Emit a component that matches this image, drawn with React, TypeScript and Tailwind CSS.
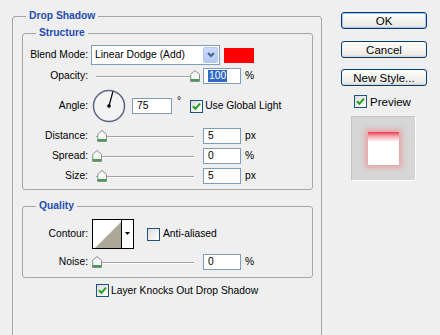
import React from "react";

function Check({ checked }: { checked: boolean }) {
  return (
    <div className="w-[13px] h-[13px] shrink-0 border border-[#1c5180] bg-[linear-gradient(135deg,#dcdcd7,#ffffff)] flex items-center justify-center">
      {checked && (
        <svg width="9" height="9" viewBox="0 0 9 9">
          <path d="M1 4.2 L3.4 6.8 L8 1.6" fill="none" stroke="#21a121" strokeWidth="2" />
        </svg>
      )}
    </div>
  );
}

function Thumb() {
  return (
    <svg width="10" height="12" viewBox="0 0 10 12">
      <path d="M5 0.5 L9.5 4.5 V11.5 H0.5 V4.5 Z" fill="#f8f8f8" stroke="#8e8e8e" />
      <path d="M1 9 H9 V11 H1 Z" fill="#3f9f52" />
      <path d="M1 5 V9" stroke="#9fd3a8" />
    </svg>
  );
}

function Slider({ pos }: { pos: number }) {
  return (
    <div className="relative w-[108px] h-[16px] shrink-0">
      <div className="absolute left-[4px] right-[6px] top-[8px] h-[2px] border-t border-[#a3a3a3] border-b border-b-white" />
      <div className="absolute top-[2px]" style={{ left: pos }}>
        <Thumb />
      </div>
    </div>
  );
}

function Field({ value, selected }: { value: string; selected?: boolean }) {
  return (
    <div className="w-[38px] h-[16px] shrink-0 border border-[#7f9db9] bg-white flex items-center pl-[4px] text-[10.3px]">
      {selected ? <span className="bg-[#316ac5] text-white px-[1px] leading-[12px]">{value}</span> : value}
    </div>
  );
}

function Label({ text }: { text: string }) {
  return <div className="w-[65px] shrink-0 text-right">{text}</div>;
}

function SliderRow({ label, pos, value, unit, selected, top }: { label: string; pos: number; value: string; unit: string; selected?: boolean; top: string }) {
  return (
    <div className={`flex items-center h-[16px] ${top}`}>
      <Label text={label} />
      <div className="ml-[4px]"><Slider pos={pos} /></div>
      <div className="ml-[3px]"><Field value={value} selected={selected} /></div>
      <div className="ml-[4px]">{unit}</div>
    </div>
  );
}

export default function App() {
  return (
    <div className="w-[440px] h-[335px] overflow-hidden bg-[#efefef] flex font-['Liberation_Sans',Arial,sans-serif] text-black text-[10.3px] leading-[12px]">
      <div className="pl-[12px] pt-[10px] shrink-0">
        <fieldset className="w-[310px] h-[340px] border border-[#a5a5a5] rounded-[3px]">
          <legend className="ml-[13px] px-[3px] h-[12px] leading-[12px] font-bold text-[10.3px] text-[#1f4db3]">Drop Shadow</legend>
          <div className="pl-[9px] pr-[8px] pt-[5px]">

            <fieldset className="border border-[#a5a5a5] rounded-[3px]">
              <legend className="ml-[13px] px-[3px] h-[12px] leading-[12px] font-bold text-[10.3px] text-[#1f4db3]">Structure</legend>
              <div className="pt-[6px] pb-[5px]">

                <div className="flex items-center h-[20px]">
                  <Label text="Blend Mode:" />
                  <div className="ml-[3px] w-[129px] h-[20px] border border-[#7f9db9] bg-white flex items-center">
                    <div className="flex-1 pl-[3px]">Linear Dodge (Add)</div>
                    <div className="w-[15px] h-[16px] mr-[1px] rounded-[2px] bg-[linear-gradient(to_bottom,#cbdafc,#b6cbf6)] border border-[#b1c6f0] flex items-center justify-center">
                      <svg width="8" height="6" viewBox="0 0 8 6">
                        <path d="M1 1 L4 4 L7 1" fill="none" stroke="#4d6185" strokeWidth="2" />
                      </svg>
                    </div>
                  </div>
                  <div className="ml-[4px] w-[30px] h-[15px] bg-[#ff0000]" />
                </div>

                <SliderRow label="Opacity:" pos={98} value="100" unit="%" selected top="mt-[3px]" />

                <div className="flex items-center h-[36px] mt-[4px]">
                  <Label text="Angle:" />
                  <svg className="ml-[4px] shrink-0" width="34" height="34" viewBox="0 0 34 34">
                    <circle cx="17" cy="17" r="15.5" fill="#f3f3f3" stroke="#5b6583" strokeWidth="1.5" />
                    <line x1="17" y1="17" x2="20.9" y2="2.5" stroke="#000" strokeWidth="1.2" />
                    <circle cx="17" cy="17" r="1.8" fill="#000" />
                  </svg>
                  <div className="ml-[6px] w-[40px] h-[16px] border border-[#7f9db9] bg-white flex items-center pl-[4px]">75</div>
                  <div className="ml-[5px] self-start mt-[7px]">°</div>
                  <div className="ml-[9px]"><Check checked /></div>
                  <div className="ml-[2px]">Use Global Light</div>
                </div>

                <SliderRow label="Distance:" pos={5} value="5" unit="px" top="mt-[4px]" />
                <SliderRow label="Spread:" pos={0} value="0" unit="%" top="mt-[4px]" />
                <SliderRow label="Size:" pos={5} value="5" unit="px" top="mt-[4px]" />
              </div>
            </fieldset>

            <fieldset className="mt-[10px] border border-[#a5a5a5] rounded-[3px]">
              <legend className="ml-[13px] px-[3px] h-[12px] leading-[12px] font-bold text-[10.3px] text-[#1f4db3]">Quality</legend>
              <div className="pt-[7px] pb-[7px]">
                <div className="flex items-center h-[30px]">
                  <Label text="Contour:" />
                  <svg className="ml-[4px] shrink-0" width="42" height="30" viewBox="0 0 42 30">
                    <rect x="0.5" y="0.5" width="41" height="29" fill="#fff" stroke="#000" />
                    <path d="M3 29 L29 3 V29 Z" fill="#aca899" />
                    <line x1="29.5" y1="0.5" x2="29.5" y2="29.5" stroke="#000" />
                    <path d="M33 13 H38 L35.5 16 Z" fill="#000" />
                  </svg>
                  <div className="ml-[13px]"><Check checked={false} /></div>
                  <div className="ml-[3px]">Anti-aliased</div>
                </div>
                <SliderRow label="Noise:" pos={0} value="0" unit="%" top="mt-[5px]" />
              </div>
            </fieldset>

            <div className="flex items-center mt-[6px] pl-[74px]">
              <Check checked />
              <div className="ml-[2px]">Layer Knocks Out Drop Shadow</div>
            </div>
          </div>
        </fieldset>
      </div>

      <div className="ml-[19px] pt-[12px] w-[86px] flex flex-col text-[11.5px]">
        <div className="h-[17px] rounded-[3px] border border-[#003c74] bg-[linear-gradient(to_bottom,#ffffff,#ecebe6_85%,#d6d0c5)] shadow-[inset_0_0_0_1px_#a9c4f0] flex items-center justify-center">OK</div>
        <div className="mt-[12px] h-[17px] rounded-[3px] border border-[#003c74] bg-[linear-gradient(to_bottom,#ffffff,#ecebe6_85%,#d6d0c5)] flex items-center justify-center">Cancel</div>
        <div className="mt-[11px] h-[17px] rounded-[3px] border border-[#003c74] bg-[linear-gradient(to_bottom,#ffffff,#ecebe6_85%,#d6d0c5)] flex items-center justify-center">New Style...</div>
        <div className="mt-[9px] pl-[13px] flex items-center">
          <Check checked />
          <div className="ml-[3px]">Preview</div>
        </div>
        <div className="mt-[8px] ml-[10px] w-[65px] h-[65px] bg-[#d6d6d6] border border-[#c4c4c4] border-r-white border-b-white flex items-center justify-center">
          <div className="w-[31px] h-[33px] bg-[linear-gradient(to_bottom,#e8394e_0px,#f5a3ab_4px,#ffffff_10px)] shadow-[0_0_5px_3px_rgba(255,110,110,0.45)]" />
        </div>
      </div>
    </div>
  );
}
